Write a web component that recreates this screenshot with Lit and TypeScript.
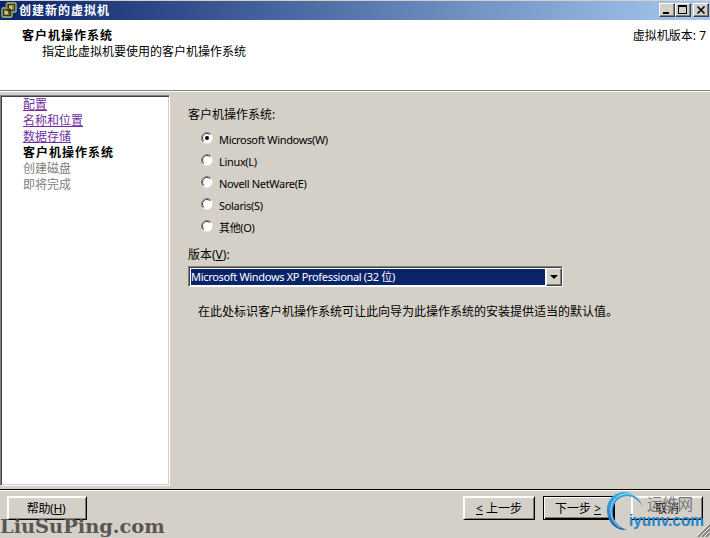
import { LitElement, html, css, svg } from 'lit';
import { customElement, property, state } from 'lit/decorators.js';

@customElement('wizard-titlebar')
export class WizardTitlebar extends LitElement {
  @property({ type: String }) heading = '';

  static styles = css`
    :host {
      display: flex;
      align-items: flex-start;
      box-sizing: border-box;
      height: 20px;
      padding: 1px 1px 0 1px;
      border-top: 1px solid #d4d0c8;
      background: linear-gradient(to right, #0a246a, #a6caf0);
      color: #fff;
    }

    .logo {
      display: block;
      width: 16px;
      height: 16px;
    }

    .heading {
      flex: 1;
      margin-left: 2px;
      font-size: 12px;
      font-weight: bold;
      letter-spacing: 1px;
      line-height: 18px;
      white-space: nowrap;
    }

    button {
      box-sizing: border-box;
      width: 16px;
      height: 14px;
      margin-top: 1px;
      padding: 0;
      border: 1px solid;
      border-color: #fff #404040 #404040 #fff;
      box-shadow: inset -1px -1px #808080;
      background: #d4d0c8;
    }

    button svg {
      display: block;
    }

    .close {
      margin-left: 2px;
    }
  `;

  render() {
    return html`
      <svg class="logo" viewBox="0 0 16 16">
        <path d="M6.500 1h7.500l1 1v7l-1 1h-3v4l-1 1H2l-1-1V7l1-1h3.500V2z" fill="#253a22" stroke="#7f9f70" stroke-width="1.800" />
        <path d="M8 3.500h4.500v4H10M5.500 8H3.500v4.500H8V10.500" fill="none" stroke="#a98c4c" />
        <path d="M8 4h3.500v3H9v2.500H7V12H4V9h2.500V6.500H8z" fill="#e9bd60" />
        <path d="M6.500 6.500h3v3h-3z" fill="#3a2c14" />
      </svg>
      <span class="heading">${this.heading}</span>
      <button>
        <svg width="14" height="12"><path d="M3 8h6v2H3z" /></svg>
      </button>
      <button>
        <svg width="14" height="12"><path d="M2 1h9v9H2zM3 3v6h7V3z" fill-rule="evenodd" /></svg>
      </button>
      <button class="close">
        <svg width="14" height="12"><path d="M3.500 2.500l7 7M10.500 2.500l-7 7" stroke="#000" stroke-width="1.600" /></svg>
      </button>
    `;
  }
}

@customElement('wizard-steps')
export class WizardSteps extends LitElement {
  @property({ type: Array }) steps: { label: string; status: string }[] = [];

  static styles = css`
    :host {
      display: block;
      box-sizing: border-box;
      border: 1px solid;
      border-color: #808080 #fff #fff #808080;
      box-shadow: inset 1px 1px #404040, inset -1px -1px #d4d0c8;
      background: #fff;
      padding: 1px 0 0 22px;
    }

    div {
      height: 16px;
      line-height: 16px;
      font-size: 12px;
      white-space: nowrap;
    }

    .done {
      color: #7030a0;
      text-decoration: underline;
      text-underline-offset: 1px;
    }

    .current {
      font-weight: bold;
      letter-spacing: 1px;
    }

    .pending {
      color: #808080;
    }
  `;

  render() {
    return html`${this.steps.map(s => html`<div class=${s.status}>${s.label}</div>`)}`;
  }
}

@customElement('os-radio')
export class OsRadio extends LitElement {
  @property({ type: Boolean }) checked = false;

  static styles = css`
    :host {
      display: flex;
      height: 22px;
    }

    svg {
      display: block;
      width: 12px;
      height: 12px;
      margin-right: 6px;
    }

    span {
      padding-top: 1px;
      line-height: 14px;
      font-size: 11px;
      letter-spacing: -0.33px;
      white-space: nowrap;
    }
  `;

  render() {
    return html`
      <svg viewBox="0 0 12 12">
        <circle cx="6" cy="6" r="5.5" fill="#fff" />
        <path d="M2.1 9.9A5.5 5.5 0 0 1 9.9 2.1" fill="none" stroke="#808080" />
        <path d="M2.8 9.2A4.5 4.5 0 0 1 9.2 2.8" fill="none" stroke="#404040" />
        ${this.checked ? svg`<circle cx="6" cy="6" r="2" fill="#000" />` : ''}
      </svg>
      <span><slot></slot></span>
    `;
  }
}

@customElement('app-root')
export class AppRoot extends LitElement {
  @state() selected = 'W';

  steps = [
    { label: '配置', status: 'done' },
    { label: '名称和位置', status: 'done' },
    { label: '数据存储', status: 'done' },
    { label: '客户机操作系统', status: 'current' },
    { label: '创建磁盘', status: 'pending' },
    { label: '即将完成', status: 'pending' },
  ];

  systems = [
    { key: 'W', label: 'Microsoft Windows(W)' },
    { key: 'L', label: 'Linux(L)' },
    { key: 'E', label: 'Novell NetWare(E)' },
    { key: 'S', label: 'Solaris(S)' },
    { key: 'O', label: '其他(O)' },
  ];

  static styles = css`
    :host {
      position: relative;
      display: flex;
      flex-direction: column;
      width: 710px;
      height: 538px;
      overflow: hidden;
      background: #d4d0c8;
      color: #000;
      font-family: 'Noto Sans', 'Noto Sans CJK SC', sans-serif;
      font-size: 12px;
    }

    header {
      display: flex;
      justify-content: space-between;
      box-sizing: border-box;
      height: 71px;
      padding: 8px 4px 0 22px;
      border-bottom: 1px solid #808080;
      background: #fff;
      line-height: 16px;
    }

    h1 {
      margin: 0;
      font-size: 12px;
      letter-spacing: 1px;
    }

    header p {
      margin: 0 0 0 20px;
    }

    main {
      display: flex;
      box-sizing: border-box;
      height: 399px;
      padding-top: 3px;
      border-top: 1px solid #fff;
      border-bottom: 1px solid #000;
    }

    wizard-steps {
      width: 170px;
      height: 391px;
    }

    .panel {
      padding: 12px 0 0 18px;
      line-height: 16px;
    }

    .systems {
      padding: 9px 0 5px 13px;
    }

    .select {
      display: flex;
      box-sizing: border-box;
      width: 375px;
      height: 21px;
      margin-top: 3px;
      border: 1px solid;
      border-color: #808080 #fff #fff #808080;
      box-shadow: inset 1px 1px #404040;
      background: #fff;
      padding: 1px 0 0 1px;
    }

    .value {
      flex: 1;
      margin: 1px;
      background: #0a246a;
      color: #fff;
      font-size: 11px;
      letter-spacing: -0.32px;
      line-height: 15px;
      white-space: nowrap;
    }

    .arrow {
      box-sizing: border-box;
      width: 16px;
      border: 1px solid;
      border-color: #fff #404040 #404040 #fff;
      box-shadow: inset -1px -1px #808080;
      background: #d4d0c8;
    }

    .arrow svg {
      display: block;
    }

    .hint {
      margin: 17px 0 0 10px;
    }

    footer {
      display: flex;
      height: 48px;
      box-sizing: border-box;
      border-top: 1px solid #fff;
      padding: 5px 7px 0 7px;
    }

    .btn {
      box-sizing: border-box;
      width: 72px;
      height: 24px;
      padding: 0;
      border: 1px solid;
      border-color: #fff #000 #000 #fff;
      box-shadow: inset 1px 1px #fff, inset -1px -1px #808080;
      background: #d4d0c8;
      font: inherit;
      line-height: 23px;
      text-align: center;
    }

    .help {
      width: 80px;
      margin-right: auto;
      padding-right: 2px;
      letter-spacing: -0.3px;
    }

    .next {
      margin: 0 16px 0 8px;
      padding-right: 2px;
      border-color: #000;
      box-shadow: inset 1px 1px #fff, inset -1px -1px #000, inset -2px -2px #808080;
    }

    .site {
      position: absolute;
      left: 0;
      top: 515px;
      color: #595753;
      font: bold 19.4px/24px 'DejaVu Serif', serif;
      white-space: nowrap;
    }

    .badge {
      position: absolute;
      left: 604px;
      top: 488px;
    }

    .badge .cn {
      fill: #77797c;
      font-size: 15.5px;
    }

    .badge .domain {
      fill: #2186d0;
      font: bold 17px 'Liberation Sans', sans-serif;
    }

    .grip {
      position: absolute;
      right: 0;
      bottom: 1px;
    }
  `;

  render() {
    return html`
      <wizard-titlebar heading="创建新的虚拟机"></wizard-titlebar>
      <header>
        <div>
          <h1>客户机操作系统</h1>
          <p>指定此虚拟机要使用的客户机操作系统</p>
        </div>
        <span>虚拟机版本: 7</span>
      </header>
      <main>
        <wizard-steps .steps=${this.steps}></wizard-steps>
        <div class="panel">
          <div>客户机操作系统:</div>
          <div class="systems">
            ${this.systems.map(
              s => html`
                <os-radio ?checked=${s.key === this.selected} @click=${() => (this.selected = s.key)}>${s.label}</os-radio>
              `
            )}
          </div>
          <div>版本(<u>V</u>):</div>
          <div class="select">
            <span class="value">Microsoft Windows XP Professional (32 位)</span>
            <span class="arrow">
              <svg width="14" height="15"><path d="M3 6h8L7 10z" /></svg>
            </span>
          </div>
          <div class="hint">在此处标识客户机操作系统可让此向导为此操作系统的安装提供适当的默认值。</div>
        </div>
      </main>
      <footer>
        <button class="btn help">帮助(<u>H</u>)</button>
        <button class="btn"><u>&lt;</u> 上一步</button>
        <button class="btn next">下一步 <u>&gt;</u></button>
        <button class="btn">取消</button>
      </footer>
      <div class="site">LiuSuPing.com</div>
      <svg class="badge" width="106" height="50">
        <defs>
          <linearGradient id="ring" x1="0" y1="0" x2="0.3" y2="1">
            <stop offset="0" stop-color="#3fb4ea" />
            <stop offset="1" stop-color="#1565b5" />
          </linearGradient>
        </defs>
        <path d="M39 20C36 9 27 3 18 4C8 6 2 14 3 24C4 35 12 43 23 42C13 39 8 31 9 22C10 13 16 8 24 8C31 9 36 13 39 20z" fill="url(#ring)" />
        <path d="M34 10C26 3 14 5 9 14C4 23 8 34 16 40" fill="none" stroke="#d8ecf5" stroke-width="0.800" />
        <text class="cn" x="43" y="22" textLength="46">运维网</text>
        <text class="domain" x="25" y="38" textLength="75" lengthAdjust="spacingAndGlyphs">iyunv.com</text>
      </svg>
      <svg class="grip" width="13" height="13">
        <path d="M1 13L13 1M5 13l8-8M9 13l4-4" stroke="#808080" stroke-width="1.800" />
        <path d="M0 12L12 0M4 12l8-8M8 12l4-4" stroke="#fff" stroke-width="0.700" />
      </svg>
    `;
  }
}
